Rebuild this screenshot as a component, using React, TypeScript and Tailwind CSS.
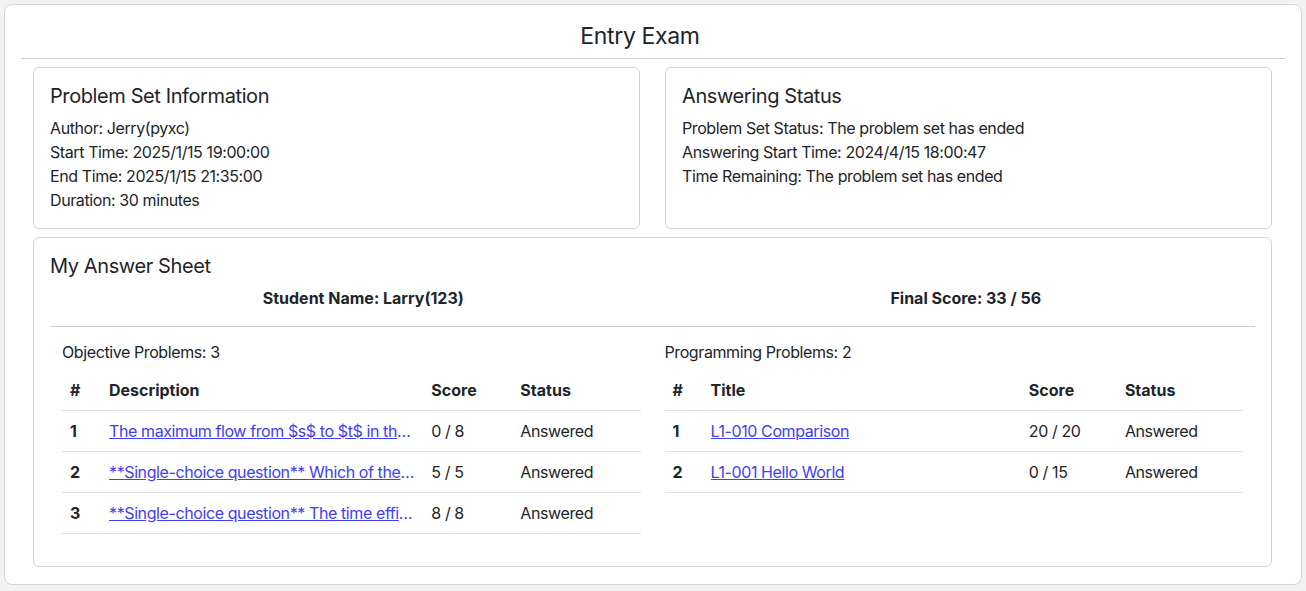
const objective = [
  { id: 1, text: 'The maximum flow from $s$ to $t$ in the network shown in the figure is ____.', score: '0 / 8', status: 'Answered' },
  { id: 2, text: '**Single-choice question** Which of the following statements about binary trees is correct?', score: '5 / 5', status: 'Answered' },
  { id: 3, text: '**Single-choice question** The time efficiency of the following algorithm is ____.', score: '8 / 8', status: 'Answered' },
];

const programming = [
  { id: 1, text: 'L1-010 Comparison', score: '20 / 20', status: 'Answered' },
  { id: 2, text: 'L1-001 Hello World', score: '0 / 15', status: 'Answered' },
];

type Row = { id: number; text: string; score: string; status: string };

function ProblemTable({ label, rows, widths }: { label: string; rows: Row[]; widths: string[] }) {
  return (
    <table className="w-full table-fixed border-collapse text-left">
      <colgroup>
        <col className={widths[0]} />
        <col className={widths[1]} />
        <col className={widths[2]} />
        <col className={widths[3]} />
      </colgroup>
      <thead>
        <tr className="border-b border-[#dee2e6] tracking-normal">
          <th className="px-2 py-2 font-bold">#</th>
          <th className="px-2 py-2 font-bold">{label}</th>
          <th className="px-2 py-2 font-bold">Score</th>
          <th className="px-2 py-2 font-bold">Status</th>
        </tr>
      </thead>
      <tbody>
        {rows.map((r) => (
          <tr key={r.id} className="border-b border-[#dee2e6]">
            <td className="px-2 py-2 font-bold tracking-normal">{r.id}</td>
            <td className="overflow-hidden px-2 py-2">
              <a href="#" className="block truncate text-[#4040f5] underline">
                {r.text}
              </a>
            </td>
            <td className="px-2 py-2">{r.score}</td>
            <td className="px-2 py-2">{r.status}</td>
          </tr>
        ))}
      </tbody>
    </table>
  );
}

export default function App() {
  return (
    <div className="min-h-screen bg-[#f2f2f2] p-1 text-[16px] leading-6 tracking-[-0.025em] text-[#212529]" style={{ fontFamily: 'Inter, "Noto Sans", sans-serif' }}>
      <div className="rounded-lg border border-[#d6d6d6] bg-white px-4 pt-[15px] pb-[17px]">
        {/* Header */}
        <div className="border-b border-[#cfcfcf] pb-1.5">
          <h1 className="pr-[26px] text-center text-[23px] leading-8 tracking-[-0.015em]">Entry Exam</h1>
        </div>

        <div className="pl-3 pr-[13px] pt-2">
          {/* Info cards */}
          <div className="grid grid-cols-2 gap-[25px]">
            <div className="rounded-md border border-[#d4d4d4] p-4">
              <h2 className="mb-2 text-[20px] leading-6">Problem Set Information</h2>
              <p>Author: Jerry(pyxc)</p>
              <p>Start Time: 2025/1/15 19:00:00</p>
              <p>End Time: 2025/1/15 21:35:00</p>
              <p>Duration: 30 minutes</p>
            </div>
            <div className="rounded-md border border-[#d4d4d4] p-4">
              <h2 className="mb-2 text-[20px] leading-6">Answering Status</h2>
              <p>Problem Set Status: The problem set has ended</p>
              <p>Answering Start Time: 2024/4/15 18:00:47</p>
              <p>Time Remaining: The problem set has ended</p>
            </div>
          </div>

          {/* Answer sheet */}
          <div className="mt-2 rounded-md border border-[#d4d4d4] p-4">
            <h2 className="text-[20px] leading-6">My Answer Sheet</h2>
            <div className="border-b border-[#cfcfcf] pb-4">
              <div className="-mr-3 mt-2 grid grid-cols-2 pl-3 text-center font-bold tracking-normal">
                <div>Student Name: Larry(123)</div>
                <div>Final Score: 33 / 56</div>
              </div>
            </div>
            <div className="-mr-3 mt-[13px] grid grid-cols-2 pl-3 pb-4">
              <div className="pr-6">
                <p className="mb-1.5">Objective Problems: 3</p>
                <ProblemTable label="Description" rows={objective} widths={['w-[39px]', 'w-[322px]', 'w-[89px]', 'w-[128px]']} />
              </div>
              <div className="pr-6">
                <p className="mb-1.5">Programming Problems: 2</p>
                <ProblemTable label="Title" rows={programming} widths={['w-[38px]', 'w-[318px]', 'w-[96px]', 'w-[126px]']} />
              </div>
            </div>
          </div>
        </div>
      </div>
    </div>
  );
}
